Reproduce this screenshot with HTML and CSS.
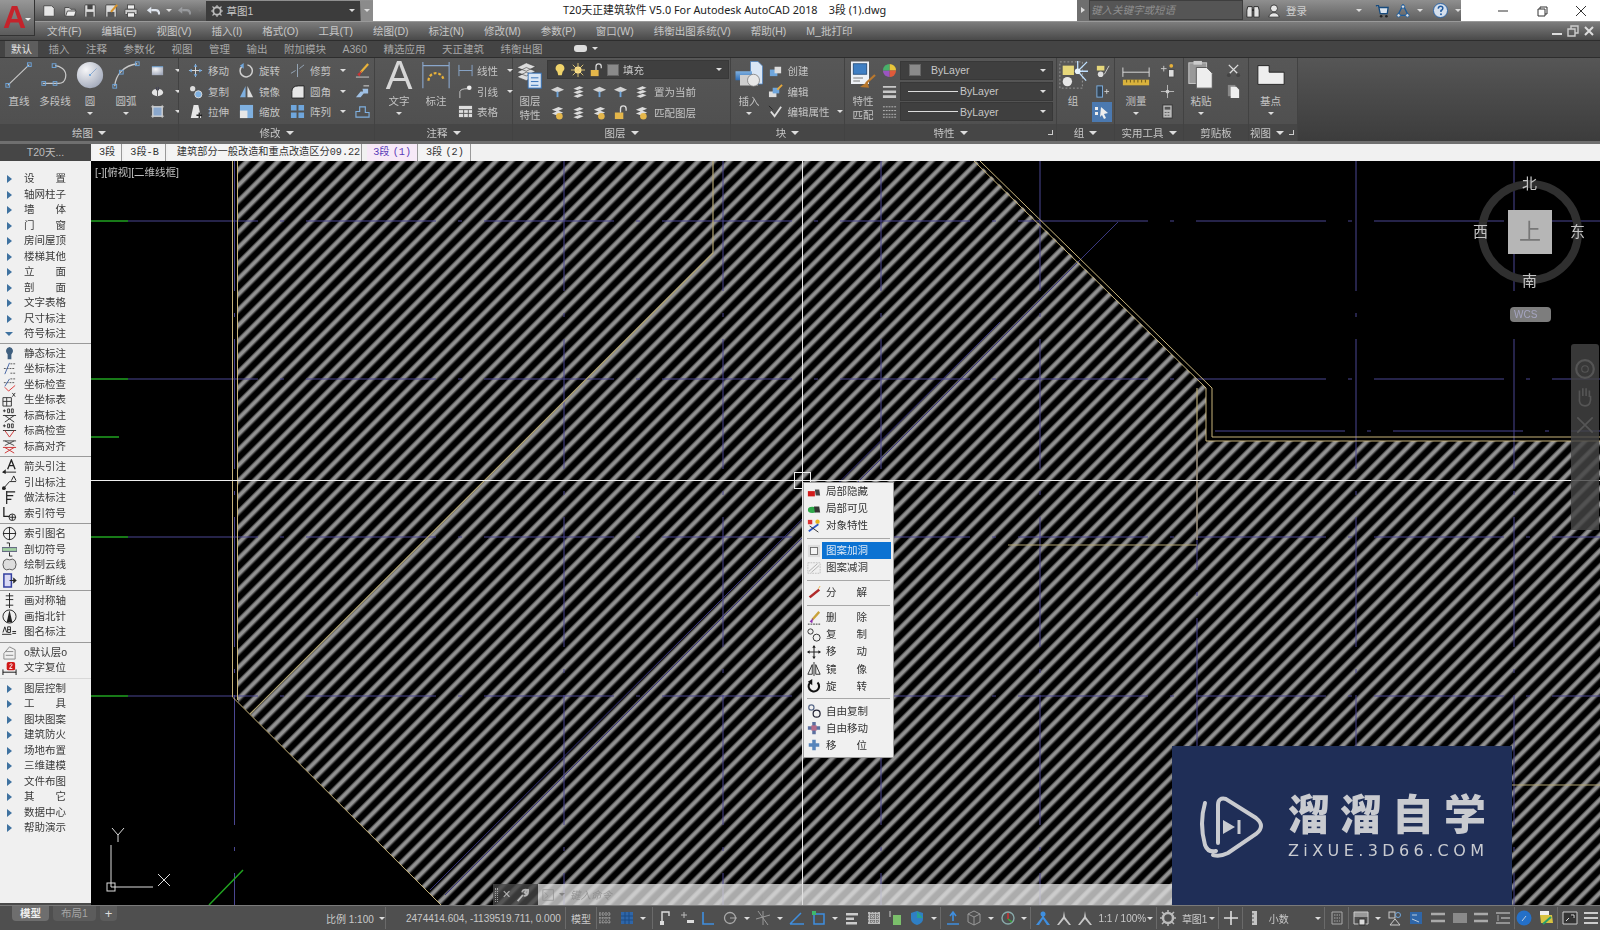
FILE: index.html
```html
<!DOCTYPE html>
<html lang="zh-CN">
<head>
<meta charset="utf-8">
<title>T20天正建筑软件</title>
<link rel="stylesheet" href="styles.css">
</head>
<body>
<svg class="sprite" aria-hidden="true">
  <defs>
    <linearGradient id="gBlue" x1="0" y1="0" x2="0" y2="1"><stop offset="0" stop-color="#7fb0e0"/><stop offset="1" stop-color="#2f6db5"/></linearGradient>
    <radialGradient id="gCircle" cx=".35" cy=".3" r=".8"><stop offset="0" stop-color="#f6f6f8"/><stop offset="1" stop-color="#9ea6b8"/></radialGradient>
    <pattern id="hatch" width="11" height="11" patternUnits="userSpaceOnUse" patternTransform="rotate(45)">
      <rect x="0" width="5.4" height="11" fill="#4c4c4c"/>
      <rect x="1.100" width="3.200" height="11" fill="#929292"/>
    </pattern>
  </defs>
  <symbol id="line" viewBox="0 0 32 32"><path d="M4 27L27 5" stroke="#c9c9c9" stroke-width="1.2" fill="none"/><rect x="2" y="25" width="4" height="4" fill="none" stroke="#6fa6dc"/><rect x="25" y="3" width="4" height="4" fill="none" stroke="#6fa6dc"/></symbol>
  <symbol id="pline" viewBox="0 0 32 32"><path d="M3 25H20C28 25 30 14 24 9Q20 6 16 6" stroke="#c9c9c9" stroke-width="1.3" fill="none"/><rect x="2" y="23" width="4" height="4" fill="none" stroke="#6fa6dc"/><rect x="13" y="4" width="4" height="4" fill="none" stroke="#6fa6dc"/><rect x="14" y="23" width="4" height="4" fill="none" stroke="#6fa6dc"/></symbol>
  <symbol id="circle" viewBox="0 0 32 32"><circle cx="16" cy="16" r="14" fill="url(#gCircle)"/><path d="M16 16L23 9" stroke="#8aa7cc"/><rect x="15" y="15" width="2" height="2" fill="#6fa6dc"/></symbol>
  <symbol id="arc" viewBox="0 0 32 32"><path d="M4 28C5 15 14 6 28 4" stroke="#c9c9c9" stroke-width="1.4" fill="none"/><rect x="2" y="26" width="4" height="4" fill="none" stroke="#6fa6dc"/><rect x="26" y="2" width="4" height="4" fill="none" stroke="#6fa6dc"/><rect x="9" y="11" width="4" height="4" fill="none" stroke="#6fa6dc"/></symbol>
  <symbol id="rect" viewBox="0 0 16 16"><path d="M2 4H14V13H2Z" fill="url(#gCircle)"/><path d="M2 4H14" stroke="#6fa6dc"/></symbol>
  <symbol id="hatchi" viewBox="0 0 16 16"><ellipse cx="8" cy="9" rx="6" ry="4" fill="#e4e4e4"/><circle cx="8" cy="5" r="2" fill="#445"/><path d="M8 3V13" stroke="#555"/></symbol>
  <symbol id="boxi" viewBox="0 0 16 16"><rect x="3" y="3" width="10" height="10" fill="#8aa7cc" stroke="#d8d8d8"/><path d="M1 3H15M1 13H15M3 1V15M13 1V15" stroke="#d8d8d8" stroke-width=".8"/></symbol>
  <symbol id="move" viewBox="0 0 16 16"><path d="M8 1V15M1 8H15" stroke="#ddd" stroke-width="1"/><path d="M8 1L10 4H6ZM8 15L6 12H10ZM1 8L4 6V10ZM15 8L12 10V6Z" fill="#6fa6dc"/></symbol>
  <symbol id="copy" viewBox="0 0 16 16"><circle cx="5" cy="5" r="2.800" fill="#ddd"/><circle cx="11" cy="11" r="3.800" fill="#7fb0e0" stroke="#ddd"/></symbol>
  <symbol id="stretch" viewBox="0 0 16 16"><path d="M3 15L6 1H11L14 15Z" fill="#e6e6e6"/><path d="M9 12H15M12 9V15" stroke="#222" stroke-width="1.4"/></symbol>
  <symbol id="rotate" viewBox="0 0 16 16"><path d="M4 3A6.500 6.500 0 1 0 9 2" stroke="#cfcfcf" stroke-width="1.600" fill="none"/><path d="M5 0V6L1 3Z" fill="#6fa6dc"/></symbol>
  <symbol id="mirror" viewBox="0 0 16 16"><path d="M7 2V14L1 14Z" fill="#7fb0e0"/><path d="M9 2V14L15 14Z" fill="#ddd"/></symbol>
  <symbol id="scale" viewBox="0 0 16 16"><rect x="1" y="1" width="14" height="14" fill="#7fb0e0"/><rect x="1" y="7" width="8" height="8" fill="#e6e6e6"/></symbol>
  <symbol id="trim" viewBox="0 0 16 16"><path d="M1 11L6 8M10 6L15 2M8 1V15" stroke="#9ab" stroke-width="1"/></symbol>
  <symbol id="fillet" viewBox="0 0 16 16"><path d="M2 15V8Q2 2 9 2H15V15Z" fill="#e6e6e6" stroke="#222"/></symbol>
  <symbol id="array" viewBox="0 0 16 16"><path d="M1 1H7V7H1ZM9 1H15V7H9ZM1 9H7V15H1ZM9 9H15V15H9Z" fill="#6fa6dc"/></symbol>
  <symbol id="erase" viewBox="0 0 16 16"><path d="M14 1L6 10" stroke="#e8b23a" stroke-width="2.400"/><path d="M7 9L3 12L5 14" fill="#c33" stroke="#c33"/><path d="M1 15H15" stroke="#ccc"/></symbol>
  <symbol id="explode" viewBox="0 0 16 16"><path d="M1 14L6 8H11L6 14ZM8 5H14V10H9Z" fill="#9fc0e4"/><path d="M9 2H15" stroke="#ddd"/></symbol>
  <symbol id="offset" viewBox="0 0 16 16"><path d="M1 14H15V9H11V3H5V8H1Z" fill="none" stroke="#7fb0e0" stroke-width="1.200"/></symbol>
  <symbol id="dim" viewBox="0 0 32 32"><path d="M2 2V30M30 2V30M2 6H30" stroke="#8aa7cc" stroke-width="1.200" fill="none"/><path d="M8 22A8 8 0 0 1 24 22" stroke="#e8b23a" stroke-width="2.400" stroke-dasharray="3 2" fill="none"/></symbol>
  <symbol id="linear" viewBox="0 0 16 16"><path d="M1 2V14M15 2V14M1 8H15" stroke="#8aa7cc" fill="none"/></symbol>
  <symbol id="leader" viewBox="0 0 16 16"><path d="M2 15V8Q3 5 10 5" stroke="#ccc" fill="none"/><circle cx="12" cy="4" r="2.500" fill="#eee"/></symbol>
  <symbol id="table" viewBox="0 0 16 16"><path d="M1 2H15V14H1Z" fill="#ddd"/><path d="M1 6H15M1 10H15M6 6V14M11 6V14" stroke="#555"/></symbol>
  <symbol id="layers" viewBox="0 0 32 32"><path d="M2 8L12 3L22 7L12 12ZM2 13L12 8L22 12L12 17ZM2 18L12 13L22 17L12 22Z" fill="#ddd" stroke="#333" stroke-width=".6"/><rect x="14" y="14" width="14" height="16" fill="#d9e6f5" stroke="#2f6db5"/><path d="M17 19H25M17 23H25M17 27H25" stroke="#2f6db5"/></symbol>
  <symbol id="bulb" viewBox="0 0 16 16"><path d="M8 1A5 5 0 0 1 11 10L10 14H6L5 10A5 5 0 0 1 8 1Z" fill="#f0d36a"/></symbol>
  <symbol id="sun" viewBox="0 0 16 16"><circle cx="8" cy="8" r="4" fill="#ffe18a"/><path d="M8 0V16M0 8H16M2 2L14 14M14 2L2 14" stroke="#e8cf7a" stroke-width="1"/></symbol>
  <symbol id="lock" viewBox="0 0 16 16"><rect x="2" y="8" width="9" height="7" fill="#e4b64a"/><path d="M8 8V4A3 3 0 0 1 14 4V6" stroke="#ddd" stroke-width="1.400" fill="none"/></symbol>
  <symbol id="lay1" viewBox="0 0 16 16"><path d="M1 6L8 3L15 6L8 9Z" fill="#d4d4d4"/><path d="M8 8V14" stroke="#6fa6dc" stroke-width="2"/></symbol>
  <symbol id="lay2" viewBox="0 0 16 16"><path d="M2 5L9 2L14 4L7 7ZM2 9L9 6L14 8L7 11ZM2 13L9 10L14 12L7 15Z" fill="#ddd" stroke="#333" stroke-width=".4"/></symbol>
  <symbol id="lay3" viewBox="0 0 16 16"><path d="M2 5L9 2L14 4L7 7ZM2 9L9 6L14 8L7 11Z" fill="#ddd"/><circle cx="10" cy="12" r="3.500" fill="#e4b64a"/></symbol>
  <symbol id="insert" viewBox="0 0 40 40"><path d="M22 2H32L38 8V32H22Z" fill="#d9e6f5" stroke="#4d82bd"/><rect x="2" y="15" width="22" height="12" fill="url(#gBlue)"/><rect x="8" y="20" width="24" height="14" fill="#cfcfcf"/><circle cx="26" cy="27" r="8" fill="#e8e8e8" stroke="#777"/></symbol>
  <symbol id="bcreate" viewBox="0 0 16 16"><rect x="2" y="7" width="8" height="7" fill="#6fa6dc"/><rect x="7" y="4" width="7" height="7" fill="#ddd"/></symbol>
  <symbol id="bedit" viewBox="0 0 16 16"><rect x="1" y="8" width="8" height="6" fill="#ddd"/><rect x="5" y="4" width="7" height="6" fill="#6fa6dc"/><path d="M15 1L10 6" stroke="#e8a93a" stroke-width="2"/></symbol>
  <symbol id="battr" viewBox="0 0 16 16"><path d="M3 8L7 13L14 3" stroke="#ddd" stroke-width="2" fill="none"/><path d="M1 2L5 6" stroke="#222"/></symbol>
  <symbol id="match" viewBox="0 0 36 40"><path d="M2 2H26V32H2Z" fill="#eef1f6"/><rect x="5" y="5" width="18" height="14" fill="#3f7fc4" stroke="#18406f"/><path d="M5 24H18M5 28H14" stroke="#555"/><path d="M34 20L22 31" stroke="#b9782d" stroke-width="3"/><path d="M24 29L14 36L26 37Z" fill="#b9782d"/></symbol>
  <symbol id="wheel" viewBox="0 0 16 16"><path d="M8 8V1A7 7 0 0 1 15 8Z" fill="#e8c53a"/><path d="M8 8H15A7 7 0 0 1 8 15Z" fill="#e05a3a"/><path d="M8 8V15A7 7 0 0 1 1 8Z" fill="#9a55c0"/><path d="M8 8H1A7 7 0 0 1 8 1Z" fill="#48b06a"/></symbol>
  <symbol id="lweight" viewBox="0 0 16 16"><path d="M1 2H15V4H1ZM1 7H15V9.500H1ZM1 12H15V15H1Z" fill="#c8c8c8"/></symbol>
  <symbol id="ltype" viewBox="0 0 16 16"><path d="M1 3H15M1 7H15M1 11H15M1 14H15" stroke="#bbb" stroke-dasharray="2 1" fill="none"/></symbol>
  <symbol id="group" viewBox="0 0 32 32"><rect x="2" y="2" width="24" height="28" fill="none" stroke="#999" stroke-dasharray="2 2"/><rect x="5" y="6" width="12" height="10" fill="#e6d77a"/><circle cx="10" cy="23" r="5" fill="#e6e6e6"/><path d="M21 12L31 2M21 12L32 12M21 12L30 22M21 12L21 1" stroke="#bfe0ff" stroke-width="1.400"/><circle cx="21" cy="12" r="3" fill="#e6f3ff"/></symbol>
  <symbol id="g1" viewBox="0 0 16 16"><rect x="2" y="3" width="8" height="5" fill="#e6d77a"/><circle cx="6" cy="12" r="3" fill="#ddd"/><path d="M10 12L15 3" stroke="#ccc"/></symbol>
  <symbol id="g2" viewBox="0 0 16 16"><rect x="2" y="2" width="6" height="12" fill="#345" stroke="#7fb0e0"/><path d="M10 8H15M12.500 5.500V10.500" stroke="#ccc"/></symbol>
  <symbol id="g3" viewBox="0 0 20 20"><rect width="20" height="20" fill="#4b79b0"/><path d="M9 5L16 11L12 12L14 16L12 17L10 13L8 15Z" fill="#eee"/><path d="M3 5H6V8H3ZM3 10H6V13H3Z" fill="#eee"/></symbol>
  <symbol id="measure" viewBox="0 0 32 32"><path d="M2 13H30M2 8V18M30 8V18" stroke="#ddd" fill="none"/><rect x="2" y="21" width="28" height="6" fill="#d9b23c"/><path d="M6 21V24M10 21V24M14 21V24M18 21V24M22 21V24M26 21V24" stroke="#6a551a"/></symbol>
  <symbol id="u1" viewBox="0 0 16 16"><path d="M1 6H7M4 3V9" stroke="#ccc"/><rect x="9" y="7" width="6" height="8" fill="#ddd" stroke="#444"/><circle cx="12" cy="3" r="2" fill="#e8b23a"/></symbol>
  <symbol id="u2" viewBox="0 0 16 16"><path d="M1 8H15M8 1V15" stroke="#bbb"/><circle cx="8" cy="8" r="2" fill="#ccc"/></symbol>
  <symbol id="u3" viewBox="0 0 16 16"><rect x="3" y="1" width="10" height="14" fill="#bbb" stroke="#333"/><rect x="5" y="3" width="6" height="3" fill="#555"/><path d="M5 9H11M5 12H11" stroke="#555" stroke-dasharray="2 1"/></symbol>
  <symbol id="paste" viewBox="0 0 32 32"><rect x="3" y="3" width="19" height="22" fill="#999" stroke="#ccc"/><rect x="8" y="1" width="9" height="4" fill="#ccc"/><path d="M11 8H22L28 14V30H11Z" fill="#eee" stroke="#555"/></symbol>
  <symbol id="scis" viewBox="0 0 16 16"><path d="M3 2L12 11M13 2L4 11" stroke="#ddd" stroke-width="1.400"/><circle cx="3" cy="13" r="2" fill="#444"/><circle cx="13" cy="13" r="2" fill="#444"/></symbol>
  <symbol id="copyc" viewBox="0 0 16 16"><rect x="2" y="1" width="8" height="12" fill="#888"/><path d="M5 3H11L14 6V15H5Z" fill="#eee"/></symbol>
  <symbol id="base" viewBox="0 0 32 32"><path d="M2 6H14V13H30V26H2Z" fill="#eee" stroke="#222"/></symbol>
  <symbol id="tri" viewBox="0 0 10 10"><path d="M3 1L8 5L3 9Z" fill="#3f72a0"/></symbol>
  <symbol id="trid" viewBox="0 0 10 10"><path d="M1 3H9L5 7Z" fill="#3f72a0"/></symbol>
  <symbol id="hide" viewBox="0 0 16 16"><rect x="1" y="7" width="8" height="6" fill="#d21c1c"/><path d="M9 5H14L15 12H10Z" fill="#444"/></symbol>
  <symbol id="show" viewBox="0 0 16 16"><ellipse cx="6" cy="9" rx="5" ry="3.500" fill="#2fa84a"/><path d="M8 5H14L15 12H9Z" fill="#333"/></symbol>
  <symbol id="obj" viewBox="0 0 16 16"><rect x="1" y="1" width="5" height="5" fill="#d33"/><circle cx="12" cy="3" r="2.500" fill="#e6b21a"/><path d="M2 14L13 6" stroke="#2a55c0" stroke-width="2"/><path d="M3 8L13 15" stroke="#222"/></symbol>
  <symbol id="hadd" viewBox="0 0 16 16"><rect x="1" y="1" width="14" height="14" fill="#ddd"/><rect x="4" y="4" width="8" height="8" fill="#f4f4f4" stroke="#666"/></symbol>
  <symbol id="hsub" viewBox="0 0 16 16"><rect x="1" y="2" width="14" height="12" fill="none" stroke="#bbb" stroke-dasharray="2 1"/><path d="M2 12L12 3M5 13L14 5" stroke="#aaa"/></symbol>
  <symbol id="dyn" viewBox="0 0 16 16"><path d="M13 3L2 12L4 14L15 5Z" fill="#b02a2a"/><path d="M13 3L15 0" stroke="#e8b23a"/></symbol>
  <symbol id="del" viewBox="0 0 16 16"><path d="M14 1L6 10" stroke="#c9a23a" stroke-width="2.600"/><path d="M7 8L3 12L6 14Z" fill="#8a2fae"/><path d="M1 15H15" stroke="#222" stroke-dasharray="2 1"/></symbol>
  <symbol id="dup" viewBox="0 0 16 16"><circle cx="4" cy="4" r="3" fill="none" stroke="#222"/><circle cx="11" cy="11" r="4" fill="none" stroke="#222"/></symbol>
  <symbol id="mv" viewBox="0 0 16 16"><path d="M8 1V15M1 8H15" stroke="#222" stroke-width="1.200"/><path d="M8 0L10 3H6ZM8 16L6 13H10ZM0 8L3 6V10ZM16 8L13 10V6Z" fill="#222"/></symbol>
  <symbol id="mir" viewBox="0 0 16 16"><path d="M8 0V16" stroke="#222"/><path d="M6 3V14H1ZM10 3V14H15Z" fill="none" stroke="#222"/></symbol>
  <symbol id="rot" viewBox="0 0 16 16"><path d="M5 3A6 6 0 1 0 12 4" stroke="#111" stroke-width="2.400" fill="none"/><path d="M6 0V7L1 3Z" fill="#111"/></symbol>
  <symbol id="fdup" viewBox="0 0 16 16"><circle cx="5" cy="4" r="3" fill="none" stroke="#5a6a8a" stroke-width="1.400"/><circle cx="11" cy="11" r="4" fill="none" stroke="#223" stroke-width="1.400"/></symbol>
  <symbol id="fmv" viewBox="0 0 16 16"><path d="M6 6V1H10V6H15V10H10V15H6V10H1V6Z" fill="#5c6f9f"/><rect x="5" y="5" width="6" height="6" fill="#b56b8a"/></symbol>
  <symbol id="pos" viewBox="0 0 16 16"><path d="M6 6V2H10V6H14V10H10V14H6V10H2V6Z" fill="#5885ba"/></symbol>
  <symbol id="pin" viewBox="0 0 16 16"><path d="M8 1A4.500 4.500 0 0 1 10 9V14H6V9A4.500 4.500 0 0 1 8 1Z" fill="#3f5f7f"/></symbol>
  <symbol id="coord" viewBox="0 0 16 16"><path d="M2 8H14M9 3H15M9 13H15" stroke="#555" stroke-dasharray="2 1"/><path d="M3 14L8 2" stroke="#3f5fa0"/></symbol>
  <symbol id="coordc" viewBox="0 0 16 16"><path d="M2 6H14M9 2H15" stroke="#555" stroke-dasharray="2 1"/><path d="M3 10L8 2" stroke="#3f5fa0"/><path d="M3 11L7 15L14 9" stroke="#d33" fill="none"/></symbol>
  <symbol id="table2" viewBox="0 0 16 16"><path d="M1 6H10V15H1ZM1 10H10M5 6V15" fill="none" stroke="#333"/><path d="M11 1L14 5M14 1L11 5" stroke="#333"/></symbol>
  <symbol id="lev" viewBox="0 0 16 16"><path d="M1 3H4M2.500 1.500V4.500M6 1H8V5H6ZM10 1H12V5H10Z" stroke="#333" fill="none"/><path d="M1 8H15M3 15L13 8M3 8L13 15" stroke="#333"/></symbol>
  <symbol id="levc" viewBox="0 0 16 16"><path d="M1 3H4M2.500 1.500V4.500M6 1H8V5H6ZM10 1H12V5H10Z" stroke="#333" fill="none"/><path d="M1 8H15" stroke="#333"/><path d="M3 8L8 15L13 8" stroke="#c33" fill="none"/></symbol>
  <symbol id="leva" viewBox="0 0 16 16"><path d="M1 2H15M3 7L13 2M3 2L13 7" stroke="#444"/><path d="M1 9H15M3 15L13 9M3 9L13 15" stroke="#c33"/></symbol>
  <symbol id="arr" viewBox="0 0 16 16"><path d="M6 11L10 1L14 11M7.500 7H12.500" stroke="#222" stroke-width="1.400" fill="none"/><path d="M1 14H15" stroke="#222"/><path d="M0 14L4 11V16Z" fill="#222"/></symbol>
  <symbol id="lead2" viewBox="0 0 16 16"><path d="M1 15L8 7H15" stroke="#222" fill="none"/><circle cx="2" cy="14" r="2" fill="#222"/><path d="M10 6L12.500 1L15 6" stroke="#222" fill="none"/></symbol>
  <symbol id="pra" viewBox="0 0 16 16"><path d="M5 1V15M5 2H14M5 6H12M5 10H10" stroke="#222" stroke-width="1.300" fill="none"/></symbol>
  <symbol id="idx" viewBox="0 0 16 16"><path d="M2 1V11H8" stroke="#222" stroke-width="1.400" fill="none"/><circle cx="11" cy="12" r="3.500" fill="none" stroke="#222"/><path d="M8 12H15M11 9V15" stroke="#222"/></symbol>
  <symbol id="idxn" viewBox="0 0 16 16"><circle cx="8" cy="8" r="6.500" fill="none" stroke="#222"/><path d="M1 8H15M8 1V15" stroke="#222"/></symbol>
  <symbol id="sect" viewBox="0 0 16 16"><rect x="0" y="6" width="16" height="4" fill="#a3d2a3" stroke="#557"/><path d="M5 1H8V5M8 11V15H11" stroke="#222" fill="none"/></symbol>
  <symbol id="cloud" viewBox="0 0 16 16"><path d="M2 4Q5 1 8 3Q12 1 14 4Q16 8 14 12Q11 15 8 13Q4 15 2 12Q0 8 2 4Z" fill="#ddd" stroke="#555"/></symbol>
  <symbol id="brk" viewBox="0 0 16 16"><path d="M2 1H10V15H2Z" fill="#d9d9f4" stroke="#333fa0" stroke-width="1.600"/><path d="M8 8H15M12 5L15 8L12 11" fill="#222" stroke="#222"/></symbol>
  <symbol id="sym" viewBox="0 0 16 16"><path d="M8 0V16M4 3H12M4 13H12M4 7H12" stroke="#222"/></symbol>
  <symbol id="north" viewBox="0 0 16 16"><circle cx="8" cy="8" r="7" fill="none" stroke="#222"/><path d="M8 1L11 14H5Z" fill="#222"/></symbol>
  <symbol id="name" viewBox="0 0 16 16"><path d="M1 9L3 3L5 9M6 3H9V9H6ZM6 6H9" stroke="#222" fill="none"/><path d="M0 11H10M11 8H15M11 10H15" stroke="#222"/></symbol>
  <symbol id="deflay" viewBox="0 0 16 16"><path d="M2 9L8 2L14 5V15H2Z" fill="none" stroke="#888"/><path d="M4 7H12M4 11H12" stroke="#888"/></symbol>
  <symbol id="txt" viewBox="0 0 16 16"><rect x="5" y="2" width="9" height="9" rx="2" fill="#d01818"/><path d="M8 5Q10 3 11 5L8 9H11" stroke="#fff" fill="none"/><path d="M1 13H15M1 10V16M15 10V16" stroke="#111"/></symbol>
  <symbol id="grid" viewBox="0 0 16 16"><path d="M3 2V14M6 2V14M9 2V14M12 2V14M2 4H14M2 8H14M2 12H14" stroke="#aaa" fill="none" stroke-dasharray="1.500 1"/></symbol>
  <symbol id="snap" viewBox="0 0 16 16"><path d="M2 2H14V14H2Z" fill="#2f66a8"/><path d="M6 2V14M10 2V14M2 6H14M2 10H14" stroke="#1d4a82"/></symbol>
  <symbol id="note" viewBox="0 0 16 16"><path d="M5 13V2H12V6" stroke="#ddd" stroke-width="1.400" fill="none"/><rect x="3" y="11" width="4" height="4" fill="#ddd"/></symbol>
  <symbol id="pm" viewBox="0 0 16 16"><path d="M2 5H8M5 2V8" stroke="#bbb"/><rect x="8" y="10" width="7" height="3" fill="#ddd"/></symbol>
  <symbol id="ortho" viewBox="0 0 16 16"><path d="M3 2V14H14" stroke="#3f8fe0" stroke-width="1.600" fill="none"/></symbol>
  <symbol id="polar" viewBox="0 0 16 16"><circle cx="8" cy="8" r="5.500" fill="none" stroke="#aaa" stroke-width="1.300"/><path d="M8 8H15" stroke="#aaa"/></symbol>
  <symbol id="iso" viewBox="0 0 16 16"><path d="M3 1L13 15M8 1V15M1 9L15 5" stroke="#999"/></symbol>
  <symbol id="ang" viewBox="0 0 16 16"><path d="M1 14H15M1 14L12 3" stroke="#3f8fe0" stroke-width="1.500"/></symbol>
  <symbol id="sq" viewBox="0 0 16 16"><path d="M3 4H13V14H3Z" fill="none" stroke="#3f8fe0" stroke-width="1.500"/><rect x="1" y="1" width="4" height="4" fill="#3fb86a"/></symbol>
  <symbol id="bars" viewBox="0 0 16 16"><path d="M2 3H14V5.500H2ZM2 7.500H10V10H2ZM2 12H13V14.500H2Z" fill="#ccc"/></symbol>
  <symbol id="check" viewBox="0 0 16 16"><rect x="2" y="2" width="12" height="12" fill="#bbb"/><path d="M2 5H14M2 8H14M2 11H14M5 2V14M8 2V14M11 2V14" stroke="#555" stroke-dasharray="1 1"/></symbol>
  <symbol id="bgreen" viewBox="0 0 16 16"><path d="M3 1V7" stroke="#ccc"/><rect x="6" y="5" width="8" height="10" fill="#7bbf6b"/></symbol>
  <symbol id="shield" viewBox="0 0 16 16"><path d="M2 3L8 1L14 3V9Q14 13 8 15Q2 13 2 9Z" fill="#2f7fc4"/><path d="M8 1V8H14" fill="#2aa090"/></symbol>
  <symbol id="up" viewBox="0 0 16 16"><path d="M2 14H14M8 11V3M5 6L8 2L11 6" stroke="#3f8fe0" stroke-width="1.600" fill="none"/></symbol>
  <symbol id="cube" viewBox="0 0 16 16"><path d="M8 1L14 4V12L8 15L2 12V4ZM2 4L8 7L14 4M8 7V15" fill="none" stroke="#999"/></symbol>
  <symbol id="gizmo" viewBox="0 0 16 16"><circle cx="8" cy="8" r="6" fill="none" stroke="#8aa" stroke-width="1.400"/><path d="M8 3V9" stroke="#d33" stroke-width="1.400"/><path d="M8 9L12 12" stroke="#3a3" stroke-width="1.400"/></symbol>
  <symbol id="anno" viewBox="0 0 16 16"><path d="M8 1L9 7L15 15H12L8 9L4 15H1L7 7ZM8 1" fill="#3f8fe0"/><circle cx="8" cy="4" r="2.500" fill="#3f8fe0"/></symbol>
  <symbol id="annog" viewBox="0 0 16 16"><path d="M8 1L9 7L15 15H13L8 9L3 15H1L7 7Z" fill="#c8c8c8"/></symbol>
  <symbol id="gear" viewBox="0 0 16 16"><circle cx="8" cy="8" r="5" fill="none" stroke="#bbb" stroke-width="2.500"/><path d="M8 0V3M8 13V16M0 8H3M13 8H16M2 2L4 4M12 12L14 14M14 2L12 4M4 12L2 14" stroke="#bbb" stroke-width="1.500"/></symbol>
  <symbol id="plus" viewBox="0 0 16 16"><path d="M8 1V15M1 8H15" stroke="#ddd" stroke-width="1.600"/></symbol>
  <symbol id="ruler" viewBox="0 0 16 16"><rect x="5" y="1" width="5" height="14" fill="#c4c4c4"/><path d="M5 4H7M5 8H7M5 12H7" stroke="#555"/></symbol>
  <symbol id="calc" viewBox="0 0 16 16"><path d="M3 2H13V14H3Z" fill="none" stroke="#aaa"/><path d="M5 5H11M5 8H11M5 11H11" stroke="#aaa" stroke-dasharray="1.500 1"/></symbol>
  <symbol id="win" viewBox="0 0 16 16"><rect x="1" y="2" width="14" height="5" fill="#999"/><path d="M1 2H15V14H1Z" fill="none" stroke="#ccc"/><path d="M6 9H12V15H6Z" fill="#ddd" stroke="#333"/></symbol>
  <symbol id="shapes" viewBox="0 0 16 16"><rect x="2" y="2" width="6" height="6" fill="none" stroke="#ccc"/><circle cx="11" cy="5" r="2.500" fill="none" stroke="#6fa6dc"/><path d="M8 9L13 15H3Z" fill="none" stroke="#ccc"/></symbol>
  <symbol id="model" viewBox="0 0 16 16"><rect x="2" y="2" width="12" height="12" fill="#2f66a8"/><path d="M4 5H9M4 9L11 12" stroke="#bcd"/></symbol>
  <symbol id="eqs" viewBox="0 0 16 16"><path d="M1 4H15M1 11H15" stroke="#aaa" stroke-width="2.500"/></symbol>
  <symbol id="solid" viewBox="0 0 16 16"><rect x="1" y="3" width="14" height="10" fill="#8a8a8a"/></symbol>
  <symbol id="ls" viewBox="0 0 16 16"><path d="M1 3H15M6 8H15M1 13H15" stroke="#aaa" stroke-width="1.500"/><path d="M3 5V11" stroke="#aaa"/></symbol>
  <symbol id="blueb" viewBox="0 0 16 16"><circle cx="8" cy="8" r="7.500" fill="#2470c8"/><path d="M6 11L10 6" stroke="#bcd"/></symbol>
  <symbol id="ymap" viewBox="0 0 16 16"><rect x="2" y="1" width="9" height="4" fill="#eee"/><path d="M2 5H14L15 13H3Z" fill="#d8c340"/><path d="M5 14L13 7" stroke="#2a9f6a" stroke-width="2"/></symbol>
  <symbol id="full" viewBox="0 0 16 16"><path d="M1 2H15V14H1Z" fill="#333" stroke="#ccc"/><path d="M4 11L7 8M9 5H12V8" stroke="#ddd"/></symbol>
  <symbol id="menu3" viewBox="0 0 16 16"><path d="M1 3H15M1 8H15M1 13H15" stroke="#ccc" stroke-width="2"/></symbol>
  <symbol id="doc" viewBox="0 0 16 16"><path d="M2 2H11L14 5V14H2Z" fill="#e6e6e6" stroke="#444"/></symbol>
  <symbol id="open" viewBox="0 0 16 16"><path d="M2 4H7L9 6H14V14H2Z" fill="#d6d6d6" stroke="#444"/><path d="M3 14L5 8H15L13 14Z" fill="#eee" stroke="#444"/></symbol>
  <symbol id="save" viewBox="0 0 16 16"><rect x="2" y="1" width="12" height="14" rx="1" fill="#ddd" stroke="#444"/><rect x="5" y="1" width="6" height="5" fill="#444"/><rect x="4" y="9" width="8" height="6" fill="#555"/></symbol>
  <symbol id="saveas" viewBox="0 0 16 16"><rect x="2" y="1" width="12" height="14" rx="1" fill="#ddd" stroke="#444"/><rect x="4" y="9" width="8" height="6" fill="#555"/><path d="M15 1L8 9" stroke="#d8932a" stroke-width="2.500"/></symbol>
  <symbol id="print" viewBox="0 0 16 16"><rect x="4" y="1" width="8" height="5" fill="#eee" stroke="#444"/><rect x="1" y="6" width="14" height="6" rx="1" fill="#ccc" stroke="#444"/><rect x="4" y="10" width="8" height="5" fill="#eee" stroke="#444"/></symbol>
  <symbol id="undo" viewBox="0 0 16 16"><path d="M6 3V11L1 7Z" fill="#dfe5ee"/><path d="M6 7H11Q15 7 15 12" stroke="#dfe5ee" stroke-width="2.500" fill="none"/></symbol>
  <symbol id="binoc" viewBox="0 0 16 16"><path d="M2 3H7V15H1V7ZM9 3H14L15 7V15H9Z" fill="#e4e4e4" stroke="#222"/><path d="M7 7H9" stroke="#222" stroke-width="2"/></symbol>
  <symbol id="user" viewBox="0 0 16 16"><circle cx="8" cy="5" r="4" fill="#e8e8e8" stroke="#333"/><path d="M2 15Q3 10 8 10Q13 10 14 15Z" fill="#e8e8e8" stroke="#333"/></symbol>
  <symbol id="cart" viewBox="0 0 16 16"><path d="M1 2H4L6 11H14L15 4H5" stroke="#174a7c" stroke-width="1.500" fill="#dbe4ee"/><circle cx="7" cy="14" r="1.500" fill="#222"/><circle cx="13" cy="14" r="1.500" fill="#222"/></symbol>
  <symbol id="tri3" viewBox="0 0 16 16"><path d="M8 1L14 13H2Z" fill="none" stroke="#1d5c9c" stroke-width="1.500"/><circle cx="8" cy="3" r="2" fill="#ddd" stroke="#1d5c9c"/><circle cx="3" cy="13" r="2" fill="#ddd" stroke="#1d5c9c"/><circle cx="13" cy="13" r="2" fill="#ddd" stroke="#1d5c9c"/></symbol>
  <symbol id="help" viewBox="0 0 16 16"><circle cx="8" cy="8" r="7.500" fill="#d5dfec" stroke="#2a62a4"/><path d="M5.500 6Q6 3.500 8 3.500Q10.500 3.500 10.500 5.500Q10.500 7 8.500 8V9.500" stroke="#1f5aa0" stroke-width="1.600" fill="none"/><circle cx="8.500" cy="12" r="1" fill="#1f5aa0"/></symbol>
</svg>

<div class="app">
  <div class="app-button"><span class="app-a">A</span><span class="app-caret"></span></div>

  <header class="titlebar">
    <div class="qat">
      <svg class="i14"><use href="#doc"/></svg>
      <svg class="i14"><use href="#open"/></svg>
      <svg class="i14"><use href="#save"/></svg>
      <svg class="i14"><use href="#saveas"/></svg>
      <svg class="i14"><use href="#print"/></svg>
      <svg class="i14 qat-undo"><use href="#undo"/></svg>
      <span class="caret light"></span>
      <svg class="i14 qat-redo"><use href="#undo"/></svg>
      <span class="caret dim"></span>
      <div class="workspace-combo"><svg class="i12"><use href="#gear"/></svg><span>草图1</span><span class="caret light push"></span></div>
      <div class="qat-more"><span class="caret light"></span></div>
    </div>
    <div class="title-text">T20天正建筑软件 V5.0 For Autodesk AutoCAD 2018&nbsp;&nbsp;&nbsp;&nbsp;3段 (1).dwg</div>
    <div class="search-group">
      <div class="search-arrow"></div>
      <div class="search-input">键入关键字或短语</div>
      <div class="search-tools">
        <svg class="i14"><use href="#binoc"/></svg>
        <svg class="i14"><use href="#user"/></svg>
        <span class="login">登录</span>
        <span class="caret light login-caret"></span>
        <svg class="i14"><use href="#cart"/></svg>
        <svg class="i14"><use href="#tri3"/></svg>
        <span class="caret light"></span>
        <svg class="i14 help-ico"><use href="#help"/></svg>
        <span class="caret light"></span>
      </div>
    </div>
    <div class="window-btns">
      <svg class="win-btn" viewBox="0 0 12 12"><path d="M1 6H11" stroke="#333"/></svg>
      <svg class="win-btn" viewBox="0 0 12 12"><path d="M2 4H9V11H2ZM4 4V2H11V9H9" stroke="#333" fill="none"/></svg>
      <svg class="win-btn" viewBox="0 0 12 12"><path d="M1 1L11 11M11 1L1 11" stroke="#333"/></svg>
    </div>
  </header>

  <nav class="menubar">
    <span>文件(F)</span><span>编辑(E)</span><span>视图(V)</span><span>插入(I)</span><span>格式(O)</span><span>工具(T)</span><span>绘图(D)</span><span>标注(N)</span><span>修改(M)</span><span>参数(P)</span><span>窗口(W)</span><span>纬衡出图系统(V)</span><span>帮助(H)</span><span>M_批打印</span>
    <div class="doc-controls">
      <svg class="doc-ctl" viewBox="0 0 12 12"><path d="M1 9H11" stroke="#ddd" stroke-width="2"/></svg>
      <svg class="doc-ctl" viewBox="0 0 12 12"><path d="M1 4H8V11H1ZM4 4V1H11V8H8" stroke="#ccc" fill="none" stroke-width="1.400"/></svg>
      <svg class="doc-ctl" viewBox="0 0 12 12"><path d="M2 2L10 10M10 2L2 10" stroke="#ddd" stroke-width="2"/></svg>
    </div>
  </nav>

  <nav class="ribbon-tabs">
    <span class="tab active">默认</span><span class="tab">插入</span><span class="tab">注释</span><span class="tab">参数化</span><span class="tab">视图</span><span class="tab">管理</span><span class="tab">输出</span><span class="tab">附加模块</span><span class="tab">A360</span><span class="tab">精选应用</span><span class="tab">天正建筑</span><span class="tab">纬衡出图</span>
    <span class="tab-pill"></span><span class="caret light"></span>
  </nav>

  <section class="ribbon">
    <div class="panel p-draw">
      <div class="panel-body">
        <div class="big w38"><svg class="i30"><use href="#line"/></svg><span>直线</span></div>
        <div class="big w34"><svg class="i30"><use href="#pline"/></svg><span>多段线</span></div>
        <div class="big w36"><svg class="i30"><use href="#circle"/></svg><span>圆</span><span class="caret light"></span></div>
        <div class="big w36"><svg class="i30"><use href="#arc"/></svg><span>圆弧</span><span class="caret light"></span></div>
        <div class="col col-draw">
          <div class="sm"><svg class="i16"><use href="#rect"/></svg><span class="caret light"></span></div>
          <div class="sm"><svg class="i16"><use href="#hatchi"/></svg><span class="caret light"></span></div>
          <div class="sm"><svg class="i16"><use href="#boxi"/></svg><span class="caret light"></span></div>
        </div>
      </div>
      <div class="panel-title">绘图<span class="caret light"></span></div>
    </div>

    <div class="panel p-modify">
      <div class="panel-body">
        <div class="col c52">
          <div class="sm"><svg class="i16"><use href="#move"/></svg><span>移动</span></div>
          <div class="sm"><svg class="i16"><use href="#copy"/></svg><span>复制</span></div>
          <div class="sm"><svg class="i16"><use href="#stretch"/></svg><span>拉伸</span></div>
        </div>
        <div class="col c52">
          <div class="sm"><svg class="i16"><use href="#rotate"/></svg><span>旋转</span></div>
          <div class="sm"><svg class="i16"><use href="#mirror"/></svg><span>镜像</span></div>
          <div class="sm"><svg class="i16"><use href="#scale"/></svg><span>缩放</span></div>
        </div>
        <div class="col c64">
          <div class="sm"><svg class="i16"><use href="#trim"/></svg><span>修剪</span><span class="caret light"></span></div>
          <div class="sm"><svg class="i16"><use href="#fillet"/></svg><span>圆角</span><span class="caret light"></span></div>
          <div class="sm"><svg class="i16"><use href="#array"/></svg><span>阵列</span><span class="caret light"></span></div>
        </div>
        <div class="col">
          <div class="sm"><svg class="i16"><use href="#erase"/></svg></div>
          <div class="sm"><svg class="i16"><use href="#explode"/></svg></div>
          <div class="sm"><svg class="i16"><use href="#offset"/></svg></div>
        </div>
      </div>
      <div class="panel-title">修改<span class="caret light"></span></div>
    </div>

    <div class="panel p-anno">
      <div class="panel-body">
        <div class="big w44"><span class="big-a">A</span><span>文字</span><span class="caret light"></span></div>
        <div class="big w30"><svg class="i30"><use href="#dim"/></svg><span>标注</span></div>
        <div class="col col-anno">
          <div class="sm"><svg class="i16"><use href="#linear"/></svg><span>线性</span><span class="caret light"></span></div>
          <div class="sm"><svg class="i16"><use href="#leader"/></svg><span>引线</span><span class="caret light"></span></div>
          <div class="sm"><svg class="i16"><use href="#table"/></svg><span>表格</span></div>
        </div>
      </div>
      <div class="panel-title">注释<span class="caret light"></span></div>
    </div>

    <div class="panel p-layer">
      <div class="panel-body">
        <div class="big w34 two"><svg class="i30"><use href="#layers"/></svg><span>图层<br>特性</span></div>
        <div class="col layer-col">
          <div class="combo layer-combo"><svg class="i14"><use href="#bulb"/></svg><svg class="i14"><use href="#sun"/></svg><svg class="i14"><use href="#lock"/></svg><i class="swatch"></i><span>填充</span><span class="caret light push"></span></div>
          <div class="sm layer-row"><svg class="i16"><use href="#lay1"/></svg><svg class="i16"><use href="#lay2"/></svg><svg class="i16"><use href="#lay1"/></svg><svg class="i16"><use href="#lay1"/></svg><svg class="i16"><use href="#lay2"/></svg><span>置为当前</span></div>
          <div class="sm layer-row"><svg class="i16"><use href="#lay3"/></svg><svg class="i16"><use href="#lay2"/></svg><svg class="i16"><use href="#lay3"/></svg><svg class="i16"><use href="#lock"/></svg><svg class="i16"><use href="#lay3"/></svg><span>匹配图层</span></div>
        </div>
      </div>
      <div class="panel-title">图层<span class="caret light"></span></div>
    </div>

    <div class="panel p-block">
      <div class="panel-body">
        <div class="big w36"><svg class="i30"><use href="#insert"/></svg><span>插入</span><span class="caret light"></span></div>
        <div class="col col-block">
          <div class="sm"><svg class="i16"><use href="#bcreate"/></svg><span>创建</span></div>
          <div class="sm"><svg class="i16"><use href="#bedit"/></svg><span>编辑</span></div>
          <div class="sm"><svg class="i16"><use href="#battr"/></svg><span>编辑属性</span><span class="caret light"></span></div>
        </div>
      </div>
      <div class="panel-title">块<span class="caret light"></span></div>
    </div>

    <div class="panel p-props">
      <div class="panel-body">
        <div class="big w36 two"><svg class="i30"><use href="#match"/></svg><span>特性<br>匹配</span></div>
        <div class="col col-props">
          <div class="prop-row prop-color"><svg class="i16"><use href="#wheel"/></svg><div class="combo"><i class="swatch"></i><span>ByLayer</span><span class="caret light push"></span></div></div>
          <div class="prop-row"><svg class="i16"><use href="#lweight"/></svg><div class="combo"><i class="rule"></i><span>ByLayer</span><span class="caret light push"></span></div></div>
          <div class="prop-row"><svg class="i16"><use href="#ltype"/></svg><div class="combo"><i class="rule"></i><span>ByLayer</span><span class="caret light push"></span></div></div>
        </div>
      </div>
      <div class="panel-title">特性<span class="caret light"></span><i class="launcher"></i></div>
    </div>

    <div class="panel p-group">
      <div class="panel-body">
        <div class="big w32"><svg class="i30"><use href="#group"/></svg><span>组</span></div>
        <div class="col col-icons">
          <div class="sm"><svg class="i16"><use href="#g1"/></svg></div>
          <div class="sm"><svg class="i16"><use href="#g2"/></svg></div>
          <div class="sm"><svg class="i20"><use href="#g3"/></svg></div>
        </div>
      </div>
      <div class="panel-title">组<span class="caret light"></span></div>
    </div>

    <div class="panel p-util">
      <div class="panel-body">
        <div class="big w42"><svg class="i30"><use href="#measure"/></svg><span>测量</span><span class="caret light"></span></div>
        <div class="col col-icons">
          <div class="sm"><svg class="i16"><use href="#u1"/></svg></div>
          <div class="sm"><svg class="i16"><use href="#u2"/></svg></div>
          <div class="sm"><svg class="i16"><use href="#u3"/></svg></div>
        </div>
      </div>
      <div class="panel-title">实用工具<span class="caret light"></span></div>
    </div>

    <div class="panel p-clip">
      <div class="panel-body">
        <div class="big w34"><svg class="i30"><use href="#paste"/></svg><span>粘贴</span><span class="caret light"></span></div>
        <div class="col col-icons">
          <div class="sm"><svg class="i16"><use href="#scis"/></svg></div>
          <div class="sm"><svg class="i16"><use href="#copyc"/></svg></div>
        </div>
      </div>
      <div class="panel-title">剪贴板</div>
    </div>

    <div class="panel p-view">
      <div class="panel-body">
        <div class="big w43"><svg class="i30"><use href="#base"/></svg><span>基点</span><span class="caret light"></span></div>
      </div>
      <div class="panel-title title-left">视图<span class="caret light"></span><i class="launcher"></i></div>
    </div>
    <div class="ribbon-rest"></div>
  </section>

  <div class="doc-tabs">
    <div class="t20-title">T20天...</div>
    <div class="doc-tab">3段</div>
    <div class="doc-tab">3段-B</div>
    <div class="doc-tab long">建筑部分一般改造和重点改造区分09.22</div>
    <div class="doc-tab current">3段 (1)</div>
    <div class="doc-tab">3段 (2)</div>
  </div>

  <main class="workspace">
    <aside class="tool-panel">
      <div class="tool-group first">
        <div class="tool"><svg class="tool-arrow"><use href="#tri"/></svg><span class="lbl">设置</span></div>
        <div class="tool"><svg class="tool-arrow"><use href="#tri"/></svg><span class="lbl">轴网柱子</span></div>
        <div class="tool"><svg class="tool-arrow"><use href="#tri"/></svg><span class="lbl">墙体</span></div>
        <div class="tool"><svg class="tool-arrow"><use href="#tri"/></svg><span class="lbl">门窗</span></div>
        <div class="tool"><svg class="tool-arrow"><use href="#tri"/></svg><span class="lbl">房间屋顶</span></div>
        <div class="tool"><svg class="tool-arrow"><use href="#tri"/></svg><span class="lbl">楼梯其他</span></div>
        <div class="tool"><svg class="tool-arrow"><use href="#tri"/></svg><span class="lbl">立面</span></div>
        <div class="tool"><svg class="tool-arrow"><use href="#tri"/></svg><span class="lbl">剖面</span></div>
        <div class="tool"><svg class="tool-arrow"><use href="#tri"/></svg><span class="lbl">文字表格</span></div>
        <div class="tool"><svg class="tool-arrow"><use href="#tri"/></svg><span class="lbl">尺寸标注</span></div>
        <div class="tool"><svg class="tool-arrow"><use href="#trid"/></svg><span class="lbl">符号标注</span></div>
      </div>
      <div class="tool-group">
        <div class="tool"><svg class="tool-ico"><use href="#pin"/></svg><span class="lbl">静态标注</span></div>
        <div class="tool"><svg class="tool-ico"><use href="#coord"/></svg><span class="lbl">坐标标注</span></div>
        <div class="tool"><svg class="tool-ico"><use href="#coordc"/></svg><span class="lbl">坐标检查</span></div>
        <div class="tool"><svg class="tool-ico"><use href="#table2"/></svg><span class="lbl">生坐标表</span></div>
        <div class="tool"><svg class="tool-ico"><use href="#lev"/></svg><span class="lbl">标高标注</span></div>
        <div class="tool"><svg class="tool-ico"><use href="#levc"/></svg><span class="lbl">标高检查</span></div>
        <div class="tool"><svg class="tool-ico"><use href="#leva"/></svg><span class="lbl">标高对齐</span></div>
      </div>
      <div class="tool-group">
        <div class="tool"><svg class="tool-ico"><use href="#arr"/></svg><span class="lbl">箭头引注</span></div>
        <div class="tool"><svg class="tool-ico"><use href="#lead2"/></svg><span class="lbl">引出标注</span></div>
        <div class="tool"><svg class="tool-ico"><use href="#pra"/></svg><span class="lbl">做法标注</span></div>
        <div class="tool"><svg class="tool-ico"><use href="#idx"/></svg><span class="lbl">索引符号</span></div>
      </div>
      <div class="tool-group">
        <div class="tool"><svg class="tool-ico"><use href="#idxn"/></svg><span class="lbl">索引图名</span></div>
        <div class="tool"><svg class="tool-ico"><use href="#sect"/></svg><span class="lbl">剖切符号</span></div>
        <div class="tool"><svg class="tool-ico"><use href="#cloud"/></svg><span class="lbl">绘制云线</span></div>
        <div class="tool"><svg class="tool-ico"><use href="#brk"/></svg><span class="lbl">加折断线</span></div>
      </div>
      <div class="tool-group">
        <div class="tool"><svg class="tool-ico"><use href="#sym"/></svg><span class="lbl">画对称轴</span></div>
        <div class="tool"><svg class="tool-ico"><use href="#north"/></svg><span class="lbl">画指北针</span></div>
        <div class="tool"><svg class="tool-ico"><use href="#name"/></svg><span class="lbl">图名标注</span></div>
      </div>
      <div class="tool-group faint">
        <div class="tool"><svg class="tool-ico"><use href="#deflay"/></svg><span class="lbl">o默认层o</span></div>
        <div class="tool"><svg class="tool-ico"><use href="#txt"/></svg><span class="lbl">文字复位</span></div>
      </div>
      <div class="tool-group last">
        <div class="tool"><svg class="tool-arrow"><use href="#tri"/></svg><span class="lbl">图层控制</span></div>
        <div class="tool"><svg class="tool-arrow"><use href="#tri"/></svg><span class="lbl">工具</span></div>
        <div class="tool"><svg class="tool-arrow"><use href="#tri"/></svg><span class="lbl">图块图案</span></div>
        <div class="tool"><svg class="tool-arrow"><use href="#tri"/></svg><span class="lbl">建筑防火</span></div>
        <div class="tool"><svg class="tool-arrow"><use href="#tri"/></svg><span class="lbl">场地布置</span></div>
        <div class="tool"><svg class="tool-arrow"><use href="#tri"/></svg><span class="lbl">三维建模</span></div>
        <div class="tool"><svg class="tool-arrow"><use href="#tri"/></svg><span class="lbl">文件布图</span></div>
        <div class="tool"><svg class="tool-arrow"><use href="#tri"/></svg><span class="lbl">其它</span></div>
        <div class="tool"><svg class="tool-arrow"><use href="#tri"/></svg><span class="lbl">数据中心</span></div>
        <div class="tool"><svg class="tool-arrow"><use href="#tri"/></svg><span class="lbl">帮助演示</span></div>
      </div>
    </aside>

    <div class="canvas">
      <svg class="drawing" viewBox="91 161 1509 744">
        <polygon points="238,161 976,161 1206,388 1206,441 1600,441 1600,905 441,905 238,702" fill="url(#hatch)"/>
        <g class="axis">
          <path d="M128 221H1600M128 379H1600M128 537H1600M128 696H1600"/>
          <path d="M564 161V905M723 161V905M881 161V905M1040 161V905M1197 440V905M1356 161V905M1514 161V905"/>
          <path d="M234.500 161V905"/>
          <path d="M1215 431H1600"/>
        </g>
        <g class="diag">
          <path d="M1118 222L860 480M1020 320L445 895M1000 322L430 890"/>
        </g>
        <g class="wall">
          <path d="M232.500 161V697L441 905"/>
          <path d="M237.500 161V700"/>
          <path d="M980 161L1212 388V437H1600"/>
          <path d="M974 161L1206 388V441H1600"/>
        </g>
        <g class="wall thin">
          <path d="M713 161V253L250 714"/>
          <path d="M1197 388V540M1008 545H1197"/>
          <path d="M1512 785H1600"/>
        </g>
        <g class="green">
          <path d="M91 221H128M91 379H128M91 437H119M91 537H128M91 696H128M209 905L243 870"/>
        </g>
        <g class="cross">
          <path d="M91 480.500H1600M802.500 161V905"/>
          <rect x="794.500" y="472.500" width="16" height="16" fill="none"/>
        </g>
        <g class="ucs">
          <path d="M111 845V887H153"/>
          <rect x="107" y="883" width="8" height="8" fill="none"/>
          <path d="M158 874L170 886M170 874L158 886M112 828L118 835L124 828M118 835V842"/>
        </g>
      </svg>
      <div class="view-label">[-][俯视][二维线框]</div>

      <div class="viewcube">
        <div class="cube-ring"></div>
        <div class="cube-face">上</div>
        <span class="dir n">北</span><span class="dir s">南</span><span class="dir w">西</span><span class="dir e">东</span>
        <div class="wcs">WCS</div>
      </div>

      <div class="nav-bar">
        <svg class="nav-ico" viewBox="0 0 20 20"><circle cx="10" cy="10" r="8" fill="none" stroke="#555" stroke-width="2"/><circle cx="10" cy="10" r="3" fill="none" stroke="#555"/></svg>
        <svg class="nav-ico" viewBox="0 0 20 20"><path d="M5 10V4M8 9V2M11 9V2M14 10V4M5 10Q4 18 10 18Q16 18 15 9" fill="none" stroke="#555" stroke-width="1.500"/></svg>
        <svg class="nav-ico" viewBox="0 0 20 20"><path d="M3 3L17 17M17 3L3 17" stroke="#555" stroke-width="1.500"/></svg>
      </div>

      <div class="command-line">
        <div class="cmd-tools"><span class="cmd-grip"></span><span class="cmd-x">✕</span><svg class="i14" viewBox="0 0 16 16"><path d="M3 15L9 8M8 5Q9 1 14 2L11 5L13 7L15 4Q15 9 10 9" stroke="#bbb" stroke-width="2" fill="none"/></svg></div>
        <div class="cmd-input"><svg class="i14" viewBox="0 0 16 16"><rect x="1" y="2" width="12" height="12" fill="none" stroke="#999"/><path d="M3 5L7 9L3 12" stroke="#999" fill="none"/></svg><span class="caret dark"></span><span class="cmd-text">键入命令</span></div>
      </div>

      <div class="context-menu">
        <div class="m-item"><svg class="i14"><use href="#hide"/></svg><span class="m-text">局部隐藏</span></div>
        <div class="m-item"><svg class="i14"><use href="#show"/></svg><span class="m-text">局部可见</span></div>
        <div class="m-item"><svg class="i14"><use href="#obj"/></svg><span class="m-text">对象特性</span></div>
        <div class="m-sep"></div>
        <div class="m-item selected"><svg class="i14"><use href="#hadd"/></svg><span class="m-text">图案加洞</span></div>
        <div class="m-item"><svg class="i14"><use href="#hsub"/></svg><span class="m-text">图案减洞</span></div>
        <div class="m-sep"></div>
        <div class="m-item"><svg class="i14"><use href="#dyn"/></svg><span class="m-text">分解</span></div>
        <div class="m-sep"></div>
        <div class="m-item"><svg class="i14"><use href="#del"/></svg><span class="m-text">删除</span></div>
        <div class="m-item"><svg class="i14"><use href="#dup"/></svg><span class="m-text">复制</span></div>
        <div class="m-item"><svg class="i14"><use href="#mv"/></svg><span class="m-text">移动</span></div>
        <div class="m-item"><svg class="i14"><use href="#mir"/></svg><span class="m-text">镜像</span></div>
        <div class="m-item"><svg class="i14"><use href="#rot"/></svg><span class="m-text">旋转</span></div>
        <div class="m-sep"></div>
        <div class="m-item"><svg class="i14"><use href="#fdup"/></svg><span class="m-text">自由复制</span></div>
        <div class="m-item"><svg class="i14"><use href="#fmv"/></svg><span class="m-text">自由移动</span></div>
        <div class="m-item"><svg class="i14"><use href="#pos"/></svg><span class="m-text">移位</span></div>
      </div>

      <div class="watermark">
        <svg class="wm-logo" viewBox="0 0 66 66">
          <path d="M7 10Q1 30 7 52Q10 60 18 58" fill="none" stroke="#c9cbd0" stroke-width="4" stroke-linecap="round"/>
          <path d="M20 50V12Q20 4 28 6L58 25Q68 33 58 41L30 60Q22 64 15 62" fill="none" stroke="#c9cbd0" stroke-width="4" stroke-linecap="round"/>
          <path d="M25 27V41L37 34Z" fill="#c9cbd0"/>
          <path d="M41 27V41" stroke="#c9cbd0" stroke-width="3"/>
        </svg>
        <div class="wm-text">
          <div class="wm-cn">溜溜自学</div>
          <div class="wm-en">ZiXUE.3D66.COM</div>
        </div>
      </div>
    </div>
  </main>

  <footer class="status">
    <div class="layout-tabs">
      <span class="l-tab on">模型</span><span class="l-tab">布局1</span><span class="l-tab plus">+</span>
    </div>
    <div class="st-group scale">比例 1:100<span class="caret light"></span></div>
    <div class="st-group coords">2474414.604, -1139519.711, 0.000</div>
    <div class="st-group model-btn">模型</div>
    <div class="st-group g-first">
      <svg class="st"><use href="#grid"/></svg><svg class="st"><use href="#snap"/></svg><span class="caret light"></span>
    </div>
    <div class="st-group">
      <svg class="st"><use href="#note"/></svg><svg class="st"><use href="#pm"/></svg><svg class="st"><use href="#ortho"/></svg><svg class="st"><use href="#polar"/></svg><span class="caret light"></span><svg class="st"><use href="#iso"/></svg><span class="caret light"></span><svg class="st"><use href="#ang"/></svg><svg class="st"><use href="#sq"/></svg><span class="caret light"></span><svg class="st"><use href="#bars"/></svg><svg class="st"><use href="#check"/></svg><svg class="st"><use href="#bgreen"/></svg><svg class="st"><use href="#shield"/></svg><span class="caret light"></span>
    </div>
    <div class="st-group">
      <svg class="st"><use href="#up"/></svg><svg class="st"><use href="#cube"/></svg><span class="caret light"></span><svg class="st"><use href="#gizmo"/></svg><span class="caret light"></span>
    </div>
    <div class="st-group g-anno">
      <svg class="st"><use href="#anno"/></svg><svg class="st"><use href="#annog"/></svg><svg class="st"><use href="#annog"/></svg><span class="st-text">1:1 / 100%</span><span class="caret light tight"></span>
    </div>
    <div class="st-group g-ws">
      <svg class="st"><use href="#gear"/></svg><span class="st-text">草图1</span><span class="caret light tight"></span>
    </div>
    <div class="st-group"><svg class="st"><use href="#plus"/></svg></div>
    <div class="st-group decimal"><svg class="st"><use href="#ruler"/></svg><span class="st-text">小数</span><span class="caret light push"></span></div>
    <div class="st-group"><svg class="st"><use href="#calc"/></svg></div>
    <div class="st-group">
      <svg class="st"><use href="#win"/></svg><span class="caret light"></span><svg class="st"><use href="#shapes"/></svg><svg class="st"><use href="#model"/></svg><svg class="st"><use href="#eqs"/></svg><svg class="st"><use href="#solid"/></svg><svg class="st"><use href="#eqs"/></svg><svg class="st"><use href="#ls"/></svg>
    </div>
    <div class="st-group g-tight"><svg class="st"><use href="#blueb"/></svg><svg class="st"><use href="#ymap"/></svg></div>
    <div class="st-group last"><svg class="st"><use href="#full"/></svg><svg class="st"><use href="#menu3"/></svg></div>
  </footer>
</div>
</body>
</html>
```

FILE: styles.css
```css
* { box-sizing: border-box; }
html, body { margin: 0; padding: 0; }
body {
  width: 1600px;
  height: 930px;
  overflow: hidden;
  background: #4a4a4a;
  font-family: "Liberation Sans", "Noto Sans CJK SC", sans-serif;
  font-size: 10.5px;
  color: #c4c4c4;
}
.sprite { position: absolute; width: 0; height: 0; }
.app { position: relative; width: 1600px; height: 930px; display: flex; flex-direction: column; filter: blur(.4px); }

svg { flex: none; display: block; overflow: visible; }
.i12 { width: 12px; height: 12px; }
.i14 { width: 14px; height: 14px; }
.i16 { width: 15px; height: 15px; margin: 0 .5px; }
.i20 { width: 20px; height: 20px; }
.i30 { width: 30px; height: 30px; }

.caret { flex: none; display: inline-block; width: 0; height: 0; border-left: 3px solid transparent; border-right: 3px solid transparent; border-top: 3px solid #ddd; }
.caret.dim { border-top-color: #777; }
.caret.dark { border-top-color: #888; }
.push { margin-left: auto; }

/* Application button */
.app-button { position: absolute; left: 0; top: 0; width: 35px; height: 36px; background: linear-gradient(#979797, #5c5c5c); border-right: 1px solid #333; border-bottom: 1px solid #333; z-index: 3; display: flex; align-items: flex-start; }
.app-a { font: 700 32px/34px "Liberation Sans", sans-serif; color: #c4232b; margin-left: 3px; }
.app-caret { width: 0; height: 0; border-left: 3px solid transparent; border-right: 3px solid transparent; border-top: 3px solid #eee; margin-top: 18px; margin-left: -1px; }

/* Title bar */
.titlebar { height: 21px; flex: none; display: flex; background: #fff; color: #222; }
.qat { margin-left: 35px; width: 338px; height: 21px; display: flex; align-items: center; background: linear-gradient(#919191, #525252); padding-left: 7px; gap: 6.500px; }
.qat-undo { margin-left: 1px; }
.qat-redo { opacity: .35; margin-left: -2px; }
.workspace-combo { width: 160px; height: 20px; margin-left: -4px; display: flex; align-items: center; gap: 4px; padding: 0 5px; background: #3c3c3c; color: #c6c6c6; }
.qat-more { width: 12px; height: 20px; display: flex; align-items: center; justify-content: center; background: #8b8b8b; margin-left: -5px; }
.title-text { width: 704px; padding-left: 190px; font: 10.850px/20px "Noto Sans", "Noto Sans CJK SC", sans-serif; color: #222; white-space: nowrap; }
.search-group { width: 384px; height: 21px; display: flex; background: linear-gradient(#8f8f8f, #5e5e5e); }
.search-arrow { width: 12px; flex: none; position: relative; background: #6f6f6f; }
.search-arrow::after { content: ""; position: absolute; left: 4px; top: 7px; border-left: 4px solid #ddd; border-top: 3px solid transparent; border-bottom: 3px solid transparent; }
.search-input { flex: none; width: 154px; height: 20px; background: #555; border: 1px solid #3e3e3e; padding-left: 1px; font-style: italic; line-height: 18px; color: #8e8e8e; white-space: nowrap; }
.search-tools { flex: 1; min-width: 0; display: flex; align-items: center; padding-left: 3px; gap: 7px; }
.login { width: 63px; flex: none; margin-left: -2px; color: #cfcfcf; }
.login-caret { margin-right: 6px; }
.help-ico { margin-left: 3px; width: 15px; height: 15px; }
.window-btns { flex: 1; display: flex; align-items: center; justify-content: flex-end; padding-right: 13px; gap: 27px; }
.win-btn { width: 12px; height: 12px; }

/* Menu bar */
.menubar { height: 19px; flex: none; position: relative; display: flex; align-items: center; padding: 0 0 2px 47px; gap: 20px; background: linear-gradient(#7d7d7d, #494949); border-top: 1px solid #999; color: #c8c8c8; white-space: nowrap; }
.doc-controls { position: absolute; right: 5px; top: 3px; display: flex; gap: 4px; }
.doc-ctl { width: 12px; height: 12px; }

/* Ribbon tabs */
.ribbon-tabs { height: 17px; flex: none; display: flex; align-items: center; padding: 0 0 1px 11px; gap: 16.500px; background: #444; border-top: 1px solid #2d2d2d; color: #a8a8a8; white-space: nowrap; isolation: isolate; }
.tab { line-height: 16px; }
.tab.active { position: relative; color: #e6e6e6; }
.tab.active::before { content: ""; position: absolute; left: -6px; right: -6px; top: 0; bottom: -1px; background: #5d5d5d; z-index: -1; }
.tab-pill { display: block; margin-left: 15px; width: 13px; height: 7px; border-radius: 3px; background: #ddd; }
.ribbon-tabs .caret { margin-left: -12px; }

/* Ribbon */
.ribbon { height: 87px; flex: none; display: flex; border-top: 1px solid #2d2d2d; border-bottom: 3px solid #6f6f6f; background: #555; position: relative; }
.panel { display: flex; flex-direction: column; flex: none; border-right: 1px solid #424242; background: linear-gradient(#575757, #4e4e4e); }
.p-draw { width: 179px; }
.p-modify { width: 196px; }
.p-anno { width: 138px; }
.p-layer { width: 218px; }
.p-block { width: 114px; }
.p-props { width: 212px; }
.p-group { width: 58px; }
.p-util { width: 69px; }
.p-clip { width: 65px; }
.p-view { width: 49px; }
.ribbon-rest { flex: 1; background: linear-gradient(#565656, #3c3c3c); }
.panel-body { flex: 1; display: flex; min-height: 0; padding-top: 2px; }
.panel-title { height: 17px; flex: none; display: flex; align-items: center; justify-content: center; gap: 5px; background: #464646; color: #c6c6c6; position: relative; white-space: nowrap; }
.panel-title .caret { border-left-width: 4px; border-right-width: 4px; border-top-width: 4px; }
.panel-title.title-left { justify-content: flex-start; padding-left: 1px; }
.launcher { position: absolute; right: 3px; top: 6px; width: 5px; height: 5px; border-right: 1px solid #ccc; border-bottom: 1px solid #ccc; }

.big { flex: none; display: flex; flex-direction: column; align-items: center; white-space: nowrap; line-height: 14px; gap: 4px; text-align: center; }
.big-a { font: 400 40px/30px "Liberation Sans", sans-serif; color: #d7d7d7; height: 30px; }
.w30 { width: 30px; }
.w32 { width: 32px; }
.w34 { width: 34px; }
.w36 { width: 36px; }
.w38 { width: 38px; }
.w42 { width: 42px; }
.w43 { width: 43px; }
.w44 { width: 44px; }
.col { display: flex; flex-direction: column; flex: none; }
.sm { height: 20.800px; display: flex; align-items: center; gap: 5px; white-space: nowrap; }
.sm .caret { margin-left: 5px; }
.col-draw { padding-left: 5px; }
.c52 { width: 51px; }
.c64 { width: 65px; }
.c64 .caret { margin-left: 4px; }
.p-modify .panel-body { padding-left: 8px; }
.p-anno .panel-body { padding-left: 2px; }
.col-anno { padding-left: 6px; }
.col-anno .sm { gap: 4px; }
.col-block { padding-left: 0; }
.col-block .sm { gap: 4.500px; }
.col-block .caret { margin-left: 3px; }
.col-icons { padding-left: 6px; align-items: center; }
.p-group .col-icons { padding-left: 2px; width: 24px; }
.p-util .col-icons { padding-left: 2px; }
.p-clip .col-icons { padding-left: 7px; }
.layer-col { width: 182px; }
.layer-combo { height: 19px; margin-bottom: 2px; }
.combo { display: flex; align-items: center; gap: 4px; height: 19px; padding: 0 6px 0 5px; background: #3f3f3f; border: 1px solid #383838; white-space: nowrap; color: #c8c8c8; }
.swatch { flex: none; display: block; width: 12px; height: 12px; background: #8a8a8a; border: 1px solid #666; }
.rule { flex: none; display: block; width: 50px; height: 1px; background: #ddd; margin-left: 2px; }
.layer-row { gap: 5px; padding-left: 2px; }
.col-props { width: 172px; }
.prop-row { height: 20.800px; display: flex; align-items: center; gap: 3px; }
.prop-row .combo { width: 153px; gap: 2px; }
.prop-color .combo { gap: 10px; padding-left: 8px; }

/* Document tabs */
.doc-tabs { height: 17px; flex: none; display: flex; align-items: stretch; background: #f1f1f1; color: #333; font-family: "Liberation Mono", "Noto Sans CJK SC", monospace; font-size: 10.200px; }
.t20-title { width: 91px; margin-right: 2px; background: #464646; color: #bdbdbd; text-align: center; line-height: 17px; font-family: "Liberation Sans", "Noto Sans CJK SC", sans-serif; font-size: 10.500px; }
.doc-tab { padding: 0 6px; line-height: 17px; border-right: 1px solid #999; margin-right: 2px; background: #f4f4f4; white-space: nowrap; word-spacing: -3px; }
.doc-tab.long { padding: 0 1px 0 9px; }
.doc-tab.current { background: #f7e9f7; color: #5b3bb8; margin-left: 3px; }

/* Workspace */
.workspace { height: 744px; flex: none; display: flex; }
.tool-panel { width: 91px; flex: none; background: #f0f0f0; color: #3a3a3a; padding-top: 10px; height: 742px; overflow: hidden; }
.tool-group { border-bottom: 1px solid #9a9a9a; padding-bottom: 2px; margin-bottom: 2px; }
.tool-group.first { padding-bottom: 1px; }
.tool-group.faint { border-bottom-color: #d8d8d8; }
.tool-group.last { border-bottom: 0; }
.tool { height: 15.500px; display: flex; align-items: center; position: relative; padding-left: 24px; }
.tool-arrow { position: absolute; left: 4px; top: 3px; width: 10px; height: 10px; }
.tool-ico { position: absolute; left: 2px; top: 0; width: 15px; height: 15px; }
.lbl { display: block; width: 42px; text-align-last: justify; white-space: nowrap; line-height: 15px; }

.canvas { flex: 1; position: relative; background: #000; overflow: hidden; }
.drawing { display: block; width: 1509px; height: 744px; filter: blur(.4px); }
.axis path { fill: none; stroke: #4b4792; stroke-width: 1; stroke-dasharray: 130 22 4 22; }
.diag path { fill: none; stroke: #3a3780; stroke-width: 1; }
.wall path { fill: none; stroke: #c8b47a; stroke-width: 1; }
.wall.thin path { stroke: #b3a572; stroke-width: 1.200; }
.green path { fill: none; stroke: #21a321; stroke-width: 1.500; }
.cross path, .cross rect { stroke: #eee; stroke-width: 1; fill: none; }
.ucs path, .ucs rect { stroke: #ddd; stroke-width: 1; fill: none; }

.view-label { position: absolute; left: 4px; top: 4px; color: #bfbfbf; white-space: nowrap; line-height: 14px; }

.viewcube { position: absolute; left: 1372px; top: 10px; width: 126px; height: 160px; color: #c4c4c4; font-size: 15px; }
.cube-ring { position: absolute; left: 15px; top: 9px; width: 104px; height: 104px; border: 8px solid #2f2f2f; border-radius: 50%; }
.cube-face { position: absolute; left: 45px; top: 39px; width: 44px; height: 44px; background: #b6b6b6; color: #777; font-size: 22px; line-height: 44px; text-align: center; }
.dir { position: absolute; line-height: 18px; }
.dir.n { left: 59px; top: 4px; }
.dir.s { left: 59px; top: 101px; }
.dir.w { left: 10px; top: 52px; }
.dir.e { left: 107px; top: 52px; }
.wcs { position: absolute; left: 47px; top: 136px; width: 41px; height: 15px; border-radius: 4px; background: #7d7d7d; color: #a5a5c0; font-size: 10px; line-height: 15px; padding-left: 4px; }

.nav-bar { position: absolute; left: 1480px; top: 183px; width: 28px; height: 186px; background: rgba(68, 68, 68, .82); border-radius: 3px 3px 0 0; display: flex; flex-direction: column; align-items: center; gap: 6px; padding-top: 14px; }
.nav-ico { width: 22px; height: 22px; }

.command-line { position: absolute; left: 402px; top: 723px; width: 679px; height: 21px; display: flex; opacity: .95; }
.cmd-tools { width: 45px; display: flex; align-items: center; gap: 4px; padding-left: 2px; background: rgba(70, 70, 70, .85); color: #bbb; }
.cmd-grip { width: 3px; height: 14px; border-left: 1px dotted #aaa; border-right: 1px dotted #aaa; }
.cmd-x { font-size: 11px; }
.cmd-input { flex: 1; display: flex; align-items: center; gap: 3px; padding-left: 4px; background: rgba(220, 220, 220, .82); color: #999; }
.cmd-text { margin-left: 2px; font-style: italic; }

/* Context menu */
.context-menu { position: absolute; left: 712px; top: 321px; width: 91px; height: 276px; padding: 0 2px; background: #f0f0f0; border: 1px solid #a0a0a0; color: #333; }
.m-item { height: 17.200px; display: flex; align-items: center; padding-left: 1px; position: relative; }
.m-text { display: block; width: 41px; margin-left: 5px; text-align-last: justify; white-space: nowrap; line-height: 15px; position: relative; z-index: 1; }
.m-item.selected .m-text { color: #dce8f6; }
.m-item.selected::after { content: ""; position: absolute; left: 16px; right: 0; top: 0; bottom: 0; background: #0c72d2; }
.m-sep { height: 1px; background: #a8a8a8; margin: 3.300px 1px; }

/* Watermark */
.watermark { position: absolute; left: 1081px; top: 585px; width: 340px; height: 159px; background: #1f2e57; display: flex; align-items: flex-start; padding: 47px 0 0 26px; gap: 24px; }
.wm-logo { width: 66px; height: 66px; }
.wm-text { color: #c9cbd0; }
.wm-cn { font: 900 42px/44px "Noto Sans CJK SC", sans-serif; letter-spacing: 10px; white-space: nowrap; margin-top: -3px; }
.wm-en { font: 400 16px/18px "DejaVu Sans", sans-serif; letter-spacing: 4.400px; margin-top: 8px; white-space: nowrap; }

/* Status bar */
.status { height: 25px; flex: none; display: flex; align-items: center; background: #4f4f4f; border-top: 1px solid #7a7a7a; color: #c9c9c9; font-size: 10px; white-space: nowrap; }
.layout-tabs { width: 324px; flex: none; height: 100%; display: flex; align-items: flex-start; padding-left: 12px; gap: 4px; font-size: 10.500px; }
.l-tab { height: 15px; line-height: 15px; padding: 0 8px; background: #5c5c5c; border-radius: 0 0 4px 4px; color: #a5a5a5; }
.l-tab.on { background: #6e6e6e; color: #eee; font-weight: 700; }
.l-tab.plus { color: #ddd; font-size: 13px; padding: 0 5px; }
.st-group { height: 22px; display: flex; align-items: center; gap: 5.700px; padding: 0 3px 0 4px; border-right: 1px solid #6a6a6a; flex: none; }
.scale { width: 62px; padding-left: 2px; gap: 5px; }
.coords { width: 180px; padding-left: 20px; padding-right: 0; }
.model-btn { width: 31px; padding: 0; justify-content: center; }
.g-first { padding-left: 0; width: 56px; }
.g-anno { padding-left: 4px; gap: 5px; }
.g-ws { padding-left: 3px; }
.g-tight { padding-left: 1px; }
.st { width: 16px; height: 16px; }
.st-group.last { border-right: 0; }
.tight { margin-left: -4px; }
.decimal { width: 82px; }
```
